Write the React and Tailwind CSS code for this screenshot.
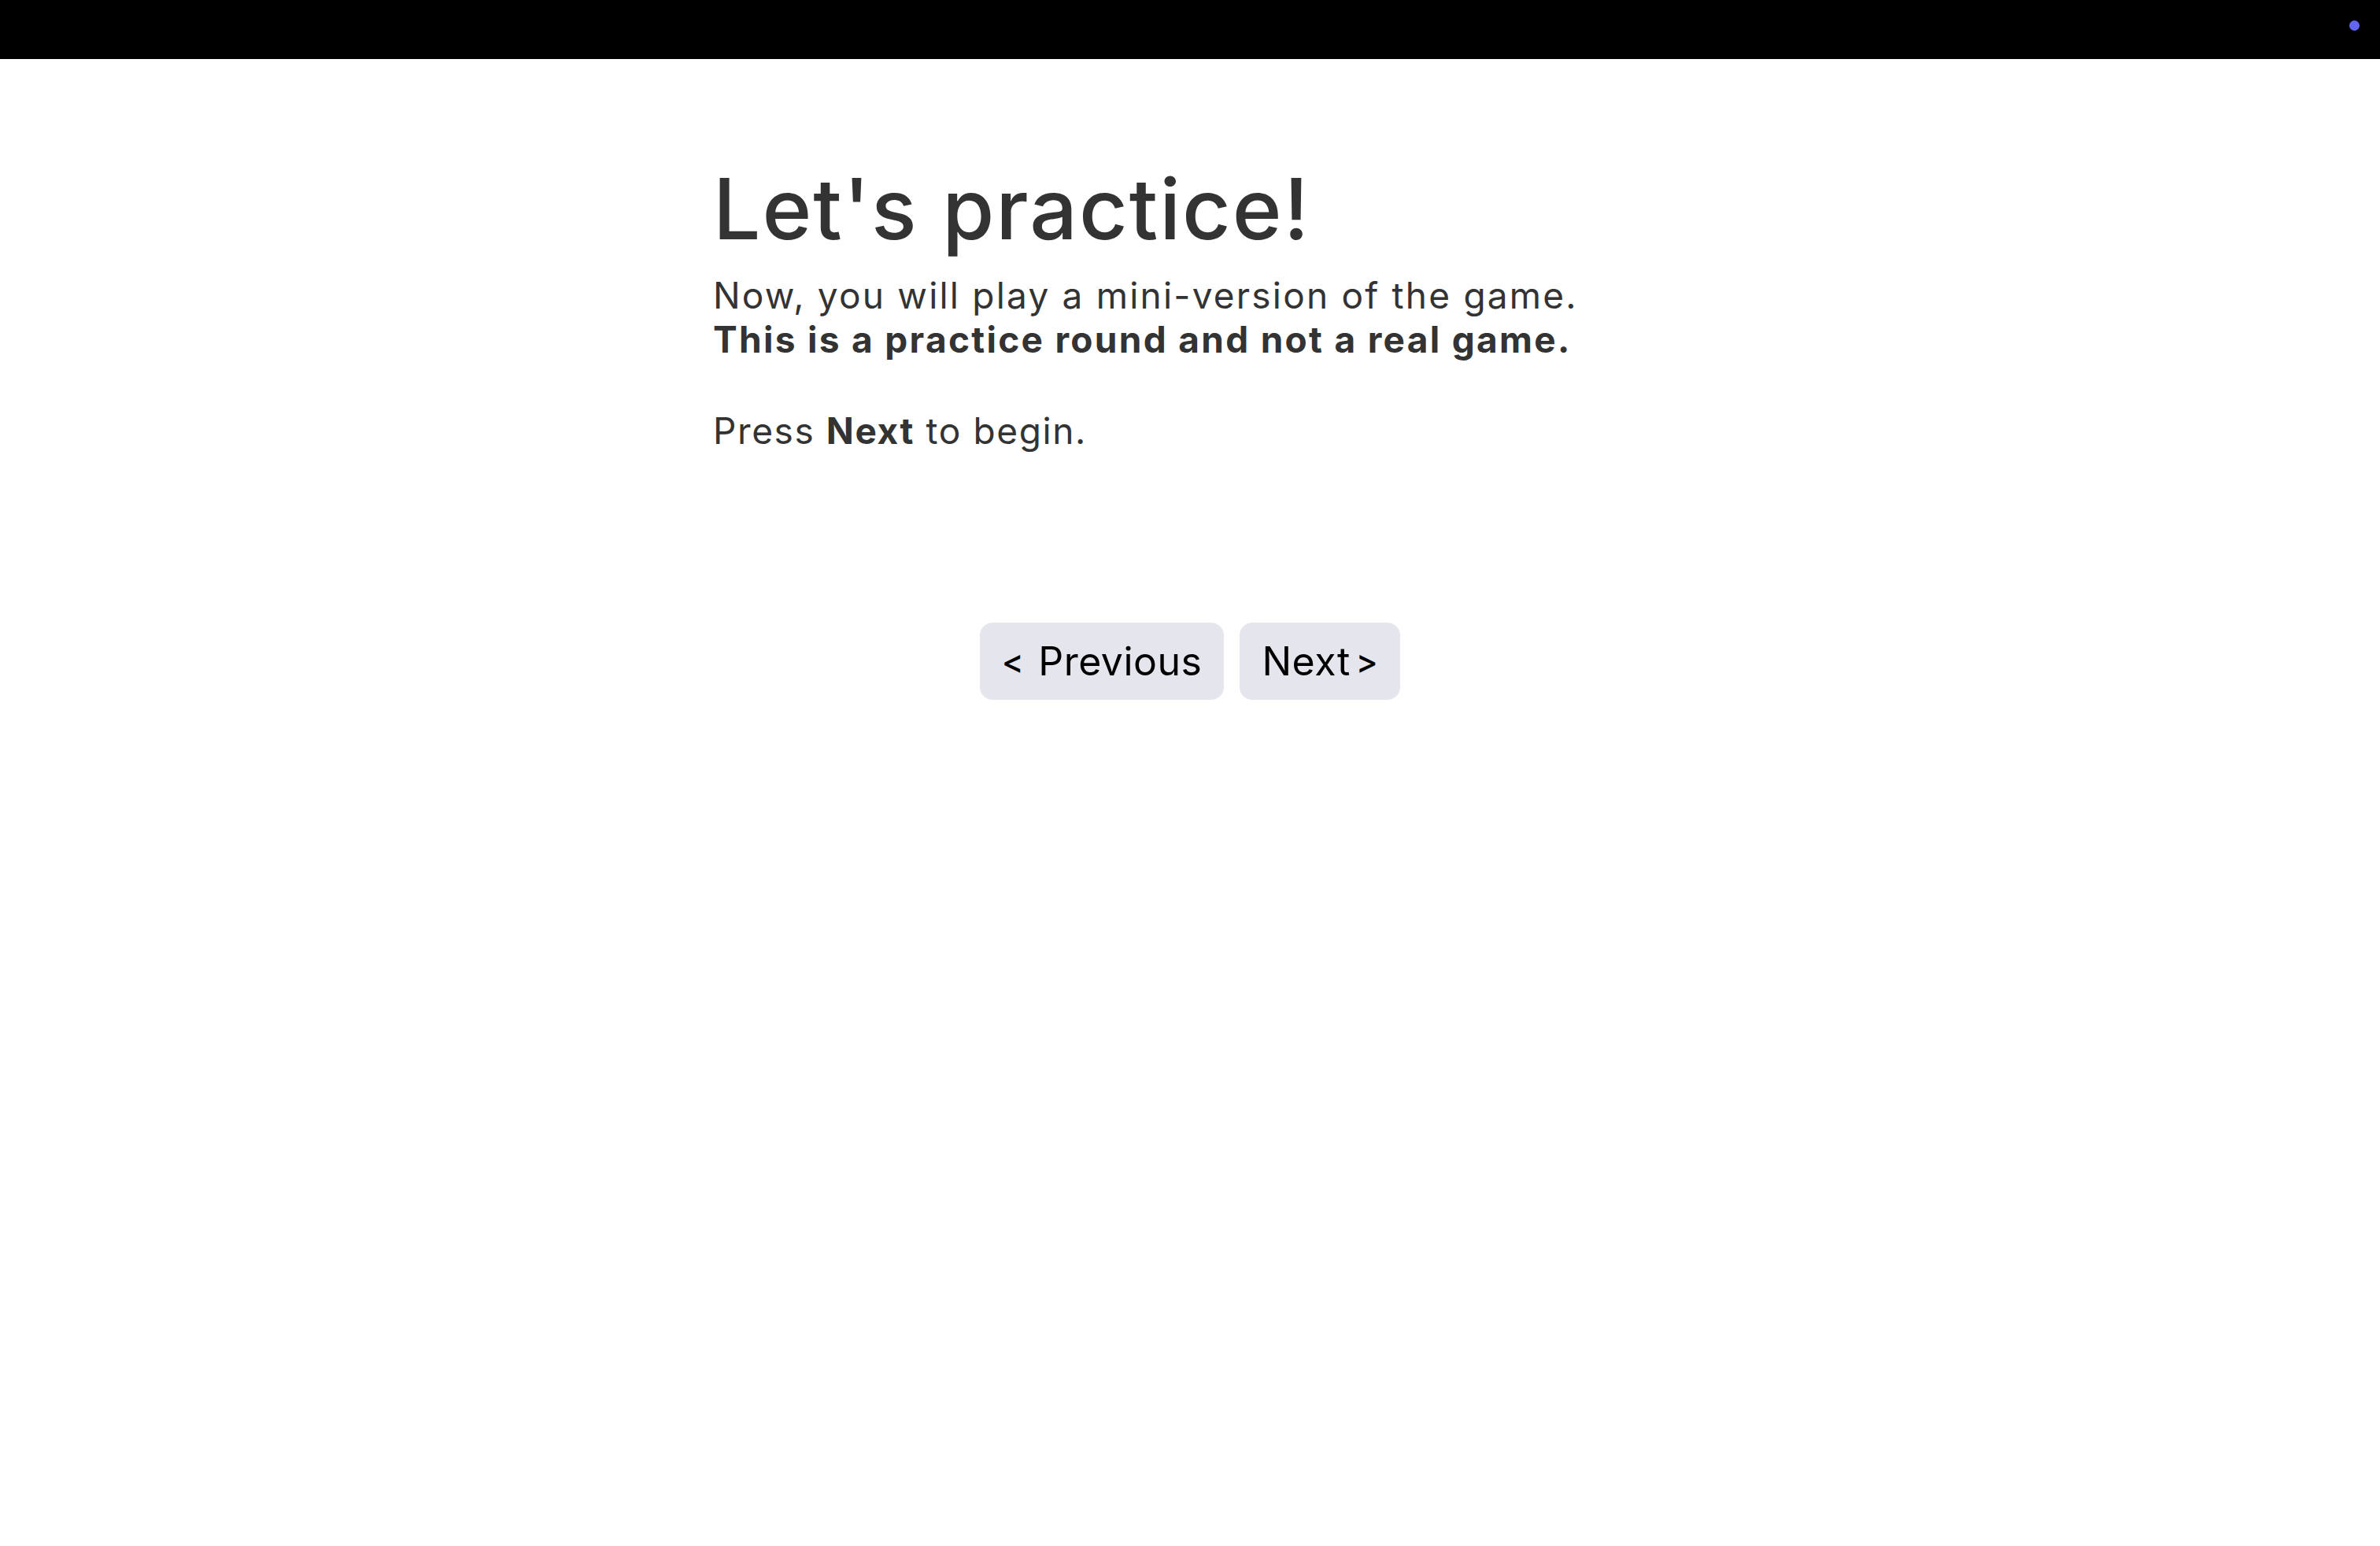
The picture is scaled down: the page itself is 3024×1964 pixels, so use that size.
export default function App() {
  return (
    <div className="min-h-screen bg-white">
      <div className="relative h-[75px] bg-black">
        <span className="absolute right-[26px] top-[26px] h-[13px] w-[13px] rounded-full bg-[#6366f1]" />
      </div>
      <main className="mx-auto w-[1212px] pt-[137px] font-['Inter',sans-serif] text-[#333333]">
        <h1 className="text-[107px] font-medium leading-none tracking-[2px]">Let's practice!</h1>
        <p className="mt-[28px] text-[46px] leading-[56px] font-normal tracking-[2.2px]">
          Now, you will play a mini-version of the game.
          <br />
          <strong className="font-bold tracking-[2.3px]">This is a practice round and not a real game.</strong>
        </p>
        <p className="mt-[60px] text-[46px] leading-[56px] font-normal tracking-[1.6px]">
          Press <strong className="font-bold">Next</strong> to begin.
        </p>
      </main>
      <div className="mt-[216px] flex justify-center gap-[20px] font-['Inter',sans-serif]">
        <button className="flex h-[98px] items-center gap-[18px] rounded-[16px] bg-[#e5e5ed] px-[28px] text-[50px] leading-none tracking-[0.5px] text-black">
          <span className="text-[42px] font-medium">&lt;</span>
          <span>Previous</span>
        </button>
        <button className="flex h-[98px] items-center gap-[7px] rounded-[16px] bg-[#e5e5ed] px-[28px] text-[50px] leading-none tracking-[0.5px] text-black">
          <span>Next</span>
          <span className="text-[42px] font-medium">&gt;</span>
        </button>
      </div>
    </div>
  );
}
